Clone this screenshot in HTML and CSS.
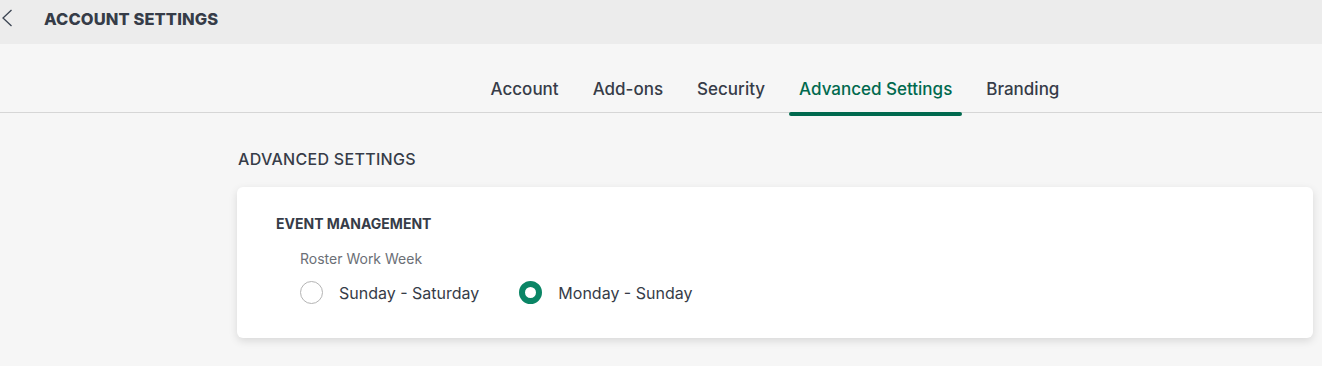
FILE: index.html
```html
<!DOCTYPE html>
<html lang="en">
<head>
    <meta charset="UTF-8">
    <title>Account Settings</title>
    <link rel="stylesheet" href="styles.css">
</head>
<body>
    <!-- Шапка -->
    <header class="topbar">
        <a class="back" href="#">
            <svg width="12" height="18" viewBox="0 0 12 18"><path d="M10.5 1 L2 9 L10.5 17" fill="none" stroke="#3b4452" stroke-width="1.3"/></svg>
        </a>
        <h1>ACCOUNT SETTINGS</h1>
    </header>

    <!-- Вкладки -->
    <nav class="tabs">
        <div class="tabs-inner">
            <a href="#" class="tab">Account</a>
            <a href="#" class="tab">Add-ons</a>
            <a href="#" class="tab">Security</a>
            <a href="#" class="tab active">Advanced Settings</a>
            <a href="#" class="tab">Branding</a>
        </div>
    </nav>

    <main class="content">
        <h2>ADVANCED SETTINGS</h2>
        <div class="card">
            <h3>EVENT MANAGEMENT</h3>
            <div class="field">
                <div class="field-label">Roster Work Week</div>
                <div class="radios">
                    <label class="radio"><span class="dot"></span>Sunday - Saturday</label>
                    <label class="radio checked"><span class="dot"></span>Monday - Sunday</label>
                </div>
            </div>
        </div>
    </main>
</body>
</html>
```
FILE: styles.css
```css
body {
    margin: 0;
    font-family: Inter, "Liberation Sans", sans-serif;
    background-color: #f6f6f6;
    color: #363c48;
}
.topbar {
    height: 44px;
    background-color: #ececec;
    display: flex;
    align-items: center;
}
.back {
    display: flex;
    width: 43px;
    padding-left: 1px;
    margin-top: -8px;
}
.topbar h1 {
    margin: 0 0 6px;
    font-size: 16.5px;
    font-weight: 800;
    letter-spacing: 0.1px;
    color: #363c48;
}
.tabs {
    padding-left: 237px;
    padding-right: 9px;
    border-bottom: 1px solid #d6d6d6;
}
.tabs-inner {
    display: flex;
    justify-content: center;
    height: 68px;
}
.tab {
    position: relative;
    display: flex;
    align-items: flex-end;
    padding: 0 17px 13px;
    font-size: 17px;
    font-weight: 500;
    color: #363c48;
    text-decoration: none;
}
.tab.active {
    color: #00694e;
    padding: 0 10px 13px;
    margin: 0 7px;
}
.tab.active::after {
    content: "";
    position: absolute;
    left: 0;
    right: 0;
    bottom: -4px;
    height: 4px;
    border-radius: 2px;
    background-color: #00694e;
}
.content {
    padding: 36px 9px 20px 237px;
}
.content h2 {
    margin: 0 0 18px 1px;
    font-size: 16px;
    font-weight: 500;
    letter-spacing: 0.3px;
    color: #363c48;
}
.card {
    background: white;
    border-radius: 6px;
    box-shadow: 0 3px 8px rgba(0, 0, 0, 0.12);
    padding: 28px 39px 34px;
}
.card h3 {
    margin: 0 0 18px;
    font-size: 14px;
    font-weight: 700;
    color: #363c48;
}
.field {
    padding-left: 24px;
}
.field-label {
    font-size: 14px;
    color: #6b6f76;
    margin-bottom: 14px;
}
.radios {
    display: flex;
    gap: 40px;
}
.radio {
    display: flex;
    align-items: center;
    gap: 16px;
    font-size: 16px;
    color: #363c48;
}
.dot {
    box-sizing: border-box;
    width: 23px;
    height: 23px;
    border-radius: 50%;
    border: 1px solid #b4b4b4;
}
.radio.checked .dot {
    border: 6px solid #0a8565;
}
```
